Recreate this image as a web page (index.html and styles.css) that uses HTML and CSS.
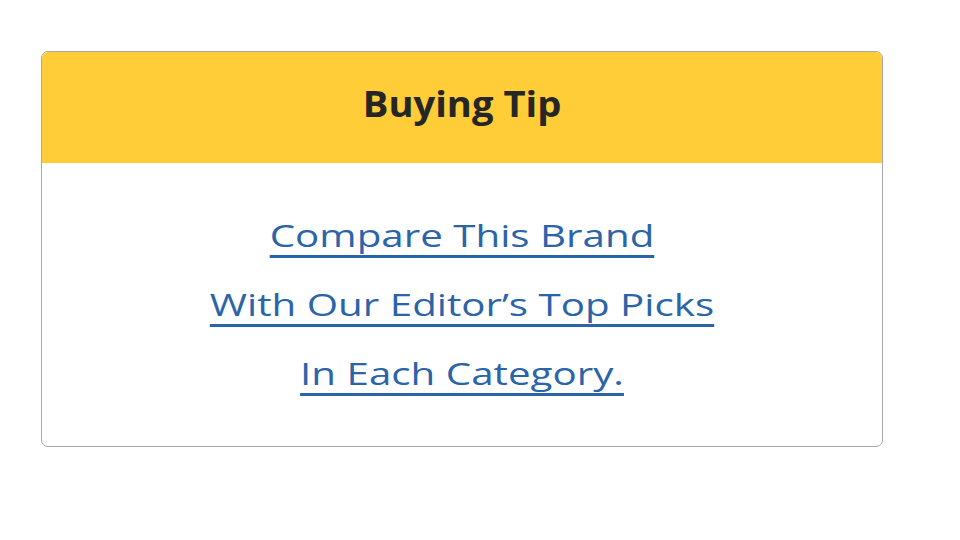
FILE: index.html
```html
<!DOCTYPE html>
<html lang="en">
<head>
<meta charset="utf-8">
<title>Buying Tip</title>
<link rel="stylesheet" href="styles.css">
</head>
<body>
<div class="page">
  <section class="tip-card">
    <header class="tip-head"><span class="tip-title">Buying Tip</span></header>
    <div class="tip-body">
      <a class="tip-link" href="#">Compare This Brand<br>With Our Editor’s Top Picks<br>In Each Category.</a>
    </div>
  </section>
</div>
</body>
</html>
```
FILE: styles.css
```css
html, body {
  margin: 0;
  padding: 0;
  background: #ffffff;
}
.page {
  padding: 51px 0 0 41px;
  font-family: "Open Sans", "Noto Sans", sans-serif;
}
.tip-card {
  box-sizing: border-box;
  width: 842px;
  height: 396px;
  border: 1px solid #a9a9a9;
  border-radius: 7px;
  overflow: hidden;
  display: flex;
  flex-direction: column;
}
.tip-head {
  box-sizing: border-box;
  height: 111px;
  padding-bottom: 9px;
  background: #fecd37;
  display: flex;
  align-items: center;
  justify-content: center;
}
.tip-title {
  display: inline-block;
  font-weight: 700;
  font-size: 35px;
  color: #262626;
  transform: scaleX(1.09);
}
.tip-body {
  flex: 1;
  display: flex;
  align-items: center;
  justify-content: center;
  text-align: center;
}
.tip-link {
  display: inline-block;
  font-size: 31px;
  font-weight: 500;
  line-height: 69px;
  color: #2b64a8;
  text-decoration: underline;
  text-decoration-thickness: 3px;
  text-underline-offset: 8px;
  text-decoration-skip-ink: auto;
  transform: scaleX(1.3);
}
```
